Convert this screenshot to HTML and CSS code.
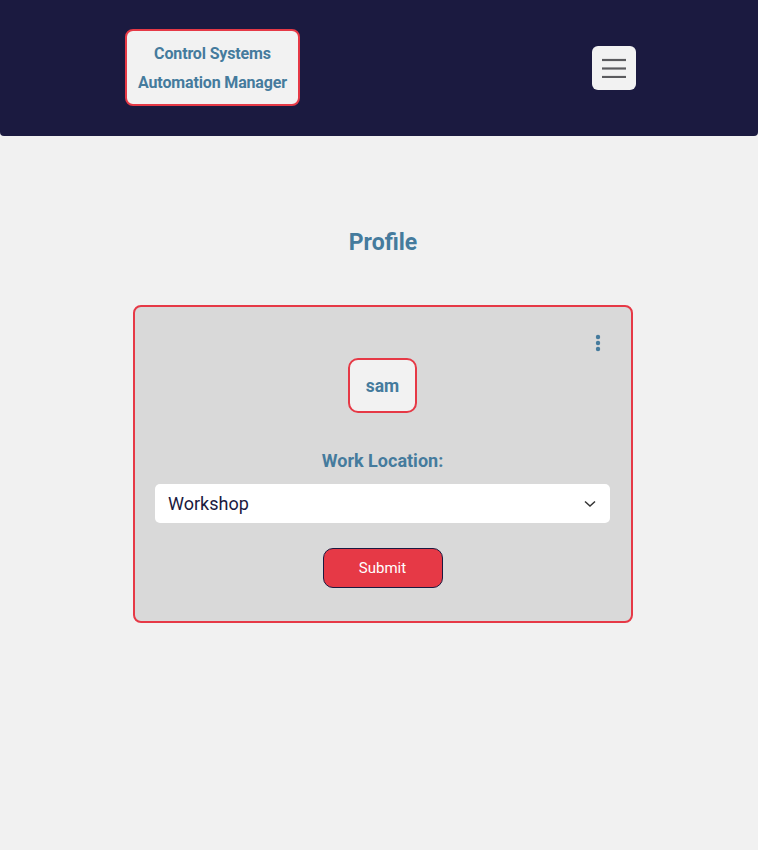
FILE: index.html
```html
<!DOCTYPE html>
<html lang="en">
<head>
<meta charset="utf-8">
<title>Profile</title>
<link rel="stylesheet" href="styles.css">
</head>
<body>
<header class="topbar">
  <div class="brand">
    <span>Control Systems</span>
    <span>Automation Manager</span>
  </div>
  <button class="menu-btn" aria-label="Menu">
    <svg width="24" height="20" viewBox="0 0 24 20"><g stroke="#5b5b5e" stroke-width="2.2"><line x1="0" y1="2" x2="24" y2="2"/><line x1="0" y1="10.5" x2="24" y2="10.5"/><line x1="0" y1="19" x2="24" y2="19"/></g></svg>
  </button>
</header>
<main class="main">
  <h1 class="title">Profile</h1>
  <section class="card">
    <div class="card-top">
      <button class="kebab" aria-label="More">
        <svg width="6" height="18" viewBox="0 0 6 18"><g fill="#457b9d"><circle cx="3" cy="3" r="2.2"/><circle cx="3" cy="9" r="2.2"/><circle cx="3" cy="15" r="2.2"/></g></svg>
      </button>
    </div>
    <div class="user">sam</div>
    <label class="field-label" for="loc">Work Location:</label>
    <div class="select-wrap">
      <select id="loc" class="select">
        <option>Workshop</option>
      </select>
      <svg class="chev" width="12" height="8" viewBox="0 0 12 8"><path d="M1 1.5 L6 6 L11 1.5" fill="none" stroke="#333" stroke-width="1.5"/></svg>
    </div>
    <button class="submit">Submit</button>
  </section>
</main>
</body>
</html>
```

FILE: styles.css
```css
* { box-sizing: border-box; }
html, body { margin: 0; padding: 0; }
body {
  background: #f1f1f1;
  font-family: Roboto, "Liberation Sans", Arial, sans-serif;
  min-height: 850px;
}
.topbar {
  background: #1b1a40;
  height: 136px;
  border-radius: 0 0 4px 4px;
  padding: 0 122px 1px 125px;
  display: flex;
  justify-content: space-between;
  align-items: center;
}
.brand {
  background: #f2f2f2;
  border: 2px solid #e63946;
  border-radius: 8px;
  width: 175px;
  height: 77px;
  display: flex;
  flex-direction: column;
  align-items: center;
  justify-content: center;
  color: #457b9d;
  font-weight: 700;
  font-size: 16px;
  line-height: 29px;
  letter-spacing: -0.15px;
}
.menu-btn {
  width: 44px;
  height: 44px;
  background: #f2f2f2;
  border: none;
  border-radius: 6px;
  display: flex;
  align-items: center;
  justify-content: center;
  padding: 0;
}
.main {
  padding-left: 8px;
  display: flex;
  flex-direction: column;
  align-items: center;
}
.title {
  margin: 93px 0 0;
  height: 28px;
  font-size: 23px;
  line-height: 28px;
  font-weight: 700;
  color: #457b9d;
}
.card {
  margin-top: 48px;
  width: 500px;
  background: #d9d9d9;
  border: 2px solid #e63946;
  border-radius: 8px;
  padding: 20px 21px 20px 20px;
  display: flex;
  flex-direction: column;
  align-items: center;
}
.card-top {
  align-self: stretch;
  height: 31px;
  display: flex;
  justify-content: flex-end;
  align-items: center;
}
.kebab {
  background: none;
  border: none;
  padding: 0;
  margin-right: 9px;
  display: flex;
}
.user {
  border: 2px solid #e63946;
  background: #f2f2f2;
  border-radius: 10px;
  width: 69px;
  height: 55px;
  display: flex;
  align-items: center;
  justify-content: center;
  color: #457b9d;
  font-weight: 700;
  font-size: 17.5px;
}
.field-label {
  margin-top: 37px;
  font-size: 18px;
  line-height: 21px;
  font-weight: 700;
  color: #457b9d;
}
.select-wrap {
  margin-top: 13px;
  align-self: stretch;
  position: relative;
}
.select {
  appearance: none;
  -webkit-appearance: none;
  width: 100%;
  height: 39px;
  background: #fff;
  border: none;
  border-radius: 5px;
  padding: 0 13px;
  font-family: Roboto, "Liberation Sans", Arial, sans-serif;
  font-size: 18px;
  color: #1b1a40;
}
.chev {
  position: absolute;
  right: 14px;
  top: 16px;
}
.submit {
  margin-top: 25px;
  width: 120px;
  height: 40px;
  background: #e63946;
  border: 1px solid #1b1a40;
  border-radius: 10px;
  color: #fff;
  font-family: Roboto, "Liberation Sans", Arial, sans-serif;
  font-size: 15px;
  margin-bottom: 13px;
}
```
